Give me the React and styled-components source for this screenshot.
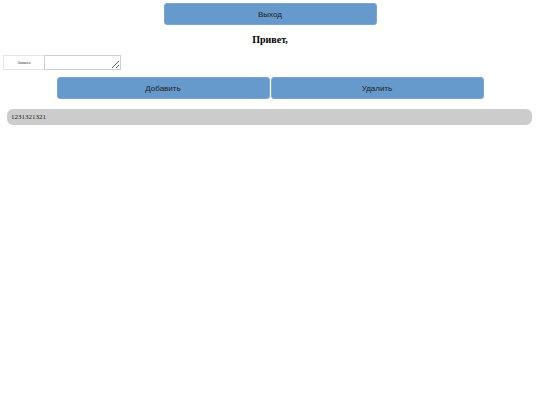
import styled, { createGlobalStyle } from "styled-components";

const GlobalStyle = createGlobalStyle`
  body {
    margin: 0;
    background: #ffffff;
    font-family: "Liberation Serif", serif;
  }
`

const Page = styled.div`
  display: flex;
  flex-direction: column;
  align-items: center;
  padding-top: 3px;
`

const BlueButton = styled.button`
  width: 213px;
  height: 22px;
  background-color: #6699cc;
  border: 1px solid #7aa6d2;
  border-radius: 3px;
  color: #222;
  font-family: "Liberation Sans", Arial, sans-serif;
  font-size: 8px;
  padding: 0;
  cursor: pointer;
`

const Greeting = styled.h2`
  margin: 9px 0 0;
  font-family: "Liberation Serif", serif;
  font-weight: bold;
  font-size: 10px;
  line-height: 12px;
  color: #000;
`

const EntryRow = styled.div`
  align-self: flex-start;
  display: flex;
  margin: 9px 0 0 3px;
  height: 15px;
`

const Label = styled.label`
  width: 41px;
  height: 15px;
  box-sizing: border-box;
  border: 1px solid #e4e4e4;
  border-right: none;
  display: flex;
  align-items: center;
  justify-content: center;
  font-family: "Liberation Serif", serif;
  font-size: 4.5px;
  color: #333;
`

const Field = styled.textarea`
  width: 77px;
  height: 15px;
  box-sizing: border-box;
  border: 1px solid #cfcfcf;
  padding: 0 2px;
  font-size: 6px;
  resize: both;
  outline: none;
`

const ButtonRow = styled.div`
  display: flex;
  gap: 1px;
  margin-top: 7px;
`

const List = styled.ul`
  list-style: none;
  margin: 10px 0 0;
  padding: 0 8px 0 7px;
  width: 100%;
  box-sizing: border-box;
`

const Item = styled.li`
  height: 16px;
  background-color: #cccccc;
  border-radius: 6px;
  display: flex;
  align-items: center;
  padding-left: 4px;
  font-family: "Liberation Serif", "Times New Roman", serif;
  font-size: 7px;
  color: #222;
`

const App = () => {
  const items = ["1231321321"];

  return (
    <Page>
      <GlobalStyle />
      <BlueButton>Выход</BlueButton>
      <Greeting>Привет,</Greeting>
      <EntryRow>
        <Label htmlFor="entry">Запись</Label>
        <Field id="entry" spellCheck={false} />
      </EntryRow>
      <ButtonRow>
        <BlueButton>Добавить</BlueButton>
        <BlueButton>Удалить</BlueButton>
      </ButtonRow>
      <List>
        {items.map((it) => (
          <Item key={it}>{it}</Item>
        ))}
      </List>
    </Page>
  )
}

export default App;
